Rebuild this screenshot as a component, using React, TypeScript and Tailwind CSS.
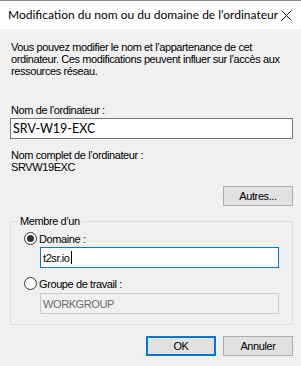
import React from 'react';

function Radio({ checked }: { checked?: boolean }) {
  return (
    <span className="flex h-[13px] w-[13px] items-center justify-center rounded-full border border-[#333333] bg-white">
      {checked && <span className="h-[7px] w-[7px] rounded-full bg-[#333333]" />}
    </span>
  );
}

export default function App() {
  return (
    <div
      className="flex h-[366px] w-[301px] flex-col border-t border-[#8c8c8c] bg-[#f0f0f0] text-[11px] leading-[12px] tracking-[-0.4px] text-black"
      style={{ fontFamily: '"Liberation Sans", Arial, sans-serif' }}
    >
      <div className="flex h-[28px] items-center justify-between bg-white pl-[8px] pr-[9px] tracking-normal">
        <span className="whitespace-nowrap text-[12px]" style={{ fontFamily: 'Lato, sans-serif' }}>
          Modification du nom ou du domaine de l’ordinateur
        </span>
        <svg width="11" height="11" viewBox="0 0 11 11" className="mt-[1px] shrink-0">
          <path d="M0.5 0.5 L10.5 10.5 M10.5 0.5 L0.5 10.5" stroke="#1a1a1a" strokeWidth="1" fill="none" />
        </svg>
      </div>

      <div className="flex flex-col pl-[10px] pr-[8px]">
        <p className="mt-[12px] pl-[1px]">
          Vous pouvez modifier le nom et l’appartenance de cet ordinateur. Ces modifications peuvent influer sur l’accès aux ressources réseau.
        </p>

        <div className="mt-[27px] pl-[1px]">Nom de l’ordinateur :</div>
        <div
          className="mt-[2px] flex h-[21px] items-center border border-[#7a7a7a] bg-white pl-[2px] text-[12.5px] tracking-normal"
          style={{ fontFamily: 'Lato, sans-serif' }}
        >
          SRV-W19-EXC
        </div>

        <div className="mt-[10px] pl-[1px]">Nom complet de l’ordinateur :</div>
        <div className="pl-[1px]">SRVW19EXC</div>

        <div className="mt-[13px] flex justify-end">
          <button className="h-[20px] w-[70px] border border-[#adadad] bg-[#e1e1e1]">Autres...</button>
        </div>

        <div className="relative mt-[15px] border border-[#dcdcdc] pb-[10px] pl-[13px] pr-[13px] pt-[10px]">
          <span className="absolute -top-[7px] left-[7px] bg-[#f0f0f0] px-[2px]">Membre d’un</span>
          <label className="flex h-[13px] items-center gap-[2px]">
            <Radio checked />
            <span>Domaine :</span>
          </label>
          <div className="ml-[16px] mt-[2px] flex h-[21px] items-center border border-[#0078d7] bg-white pl-[2px]">
            t2sr.io<span className="ml-[1px] h-[13px] w-[1px] bg-black" />
          </div>
          <label className="mt-[9px] flex h-[13px] items-center gap-[2px]">
            <Radio />
            <span>Groupe de travail :</span>
          </label>
          <div className="ml-[16px] mt-[3px] flex h-[21px] items-center border border-[#cccccc] bg-[#f0f0f0] pl-[2px] text-[#6d6d6d]">
            WORKGROUP
          </div>
        </div>

        <div className="mt-[11px] flex justify-end gap-[7px]">
          <button className="h-[20px] w-[70px] border-2 border-[#0078d7] bg-[#e1e1e1]">OK</button>
          <button className="h-[20px] w-[70px] border border-[#adadad] bg-[#e1e1e1]">Annuler</button>
        </div>
      </div>
    </div>
  );
}
